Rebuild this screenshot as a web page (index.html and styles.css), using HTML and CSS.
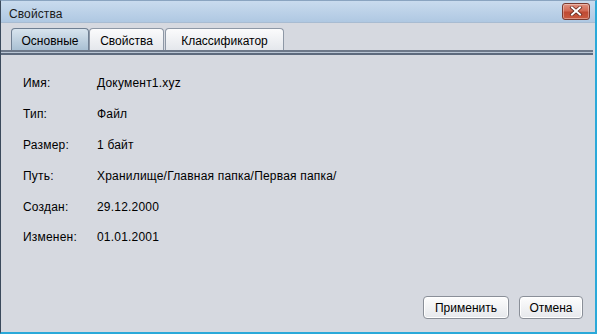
FILE: index.html
```html
<!DOCTYPE html>
<html>
<head>
<meta charset="utf-8">
<link rel="stylesheet" href="styles.css">
</head>
<body>
<div class="window">
  <div class="titlebar">
    <span class="title">Свойства</span>
    <button class="close" aria-label="Закрыть">
      <svg width="14" height="10" viewBox="0 0 14 10"><path d="M3 1.5 L11 8.5 M11 1.5 L3 8.5" stroke="#5a2018" stroke-width="3.4" stroke-linecap="square"/><path d="M3 1.5 L11 8.5 M11 1.5 L3 8.5" stroke="#ffffff" stroke-width="2" stroke-linecap="square"/></svg>
    </button>
  </div>
  <div class="tabbar">
    <div class="tab active">Основные</div>
    <div class="tab">Свойства</div>
    <div class="tab">Классификатор</div>
  </div>
  <div class="tabline"></div>
  <div class="content">
    <div class="grid">
      <div class="label">Имя:</div><div class="value">Документ1.xyz</div>
      <div class="label">Тип:</div><div class="value">Файл</div>
      <div class="label">Размер:</div><div class="value">1 байт</div>
      <div class="label">Путь:</div><div class="value">Хранилище/Главная папка/Первая папка/</div>
      <div class="label">Создан:</div><div class="value">29.12.2000</div>
      <div class="label">Изменен:</div><div class="value">01.01.2001</div>
    </div>
    <div class="buttons">
      <button class="btn apply">Применить</button>
      <button class="btn cancel">Отмена</button>
    </div>
  </div>
</div>
</body>
</html>
```
FILE: styles.css
```css
* { box-sizing: border-box; }
html, body { margin: 0; padding: 0; }
body {
  width: 597px; height: 334px; overflow: hidden;
  font-family: "Liberation Sans", Arial, sans-serif;
  font-size: 12px; color: #000;
  background: #d6d9e0;
}
.window {
  width: 597px; height: 334px;
  display: flex; flex-direction: column;
  background: #d6d9e0;
  border-left: 1px solid #3b4a5c;
  border-right: 2px solid #2aa9d9;
  border-bottom: 2px solid #2aa9d9;
  border-top: 1px solid #8aa4c0;
}
.titlebar {
  height: 22px;
  display: flex; align-items: center; justify-content: space-between;
  padding: 0 5px 0 8px;
  background: linear-gradient(#c9dbee, #afc8e2);
  border-bottom: 1px solid #a8bcd2;
}
.title { font-size: 12px; color: #1a1a1a; margin-top: 4px; letter-spacing: 0.1px; }
.close {
  width: 28px; height: 17px; margin-top: -1px;
  padding: 0; display: flex; align-items: center; justify-content: center;
  border: 1px solid #7a3a30; border-radius: 3px;
  background: linear-gradient(#e0917f 0%, #d26a55 45%, #bf4a33 55%, #c95a40 100%);
  box-shadow: inset 0 0 0 1px rgba(255,255,255,0.35);
}
.tabbar {
  display: flex; align-items: flex-end;
  padding: 0 0 0 10px;
  height: 27px;
  background: #d6d9e0;
}
.tab {
  height: 22px;
  padding: 5px 0 0;
  text-align: center;
  border: 1px solid #8e98a6; border-bottom: none;
  border-radius: 4px 4px 0 0;
  background: linear-gradient(#fbfbfc, #e4e7ec);
  font-size: 12px;
}
.tab:nth-child(1) { width: 78px; }
.tab:nth-child(2) { width: 75px; }
.tab:nth-child(3) { width: 119px; margin-left: 1px; }
.tab.active {
  background: linear-gradient(#d8e4ee, #a9c0d3);
  border-color: #6f7f92;
}
.tabline {
  height: 5px; margin-right: 2px;
  border-top: 2px solid #6d7889;
  border-bottom: 2px solid #5d6a7d;
  background: #b9c5d4;
}
.content {
  flex: 1;
  display: flex; flex-direction: column; justify-content: space-between;
  padding: 13px 12px 13px 22px;
}
.grid {
  display: grid;
  grid-template-columns: 74px auto;
  grid-auto-rows: 30.8px;
  align-items: center;
  letter-spacing: 0.2px;
}
.buttons {
  display: flex; justify-content: flex-end; gap: 10px;
}
.btn {
  height: 23px;
  font-family: "Liberation Sans", Arial, sans-serif;
  font-size: 12px; color: #000;
  border: 1px solid #8a8f98; border-radius: 4px;
  background: linear-gradient(#fdfdfd, #e6e8ec);
  box-shadow: inset 0 0 0 1px #ffffff;
  padding: 0;
}
.apply { width: 86px; }
.cancel { width: 64px; }
```
